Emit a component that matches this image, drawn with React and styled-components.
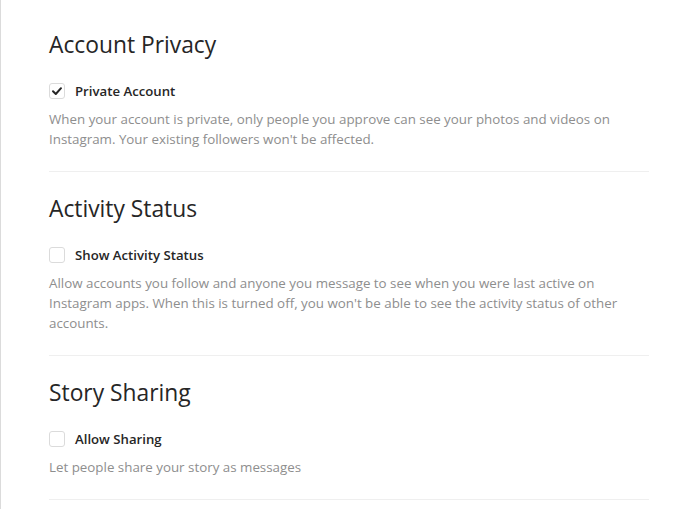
import styled, { createGlobalStyle } from "styled-components";

const GlobalStyle = createGlobalStyle`
    html, body {
        margin: 0;
        background: #fff;
    }
    body {
        font-family: "Open Sans", "Liberation Sans", sans-serif;
        color: #262626;
    }
`;

const Page = styled.div`
    min-height: 509px;
    box-sizing: border-box;
    border-left: 1px solid #dbdbdb;
    padding: 30px 0 0 48px;
`;

const SettingsList = styled.div`
    width: 600px;
`;

const Section = styled.section`
    padding: ${(p) => (p.first ? "0" : "22px")} 0 22px;
    border-bottom: 1px solid #efefef;
`;

const Heading = styled.h2`
    margin: 0;
    font-size: 22.8px;
    line-height: 30px;
    font-weight: 400;
    color: #262626;
`;

const OptionRow = styled.label`
    display: flex;
    align-items: center;
    gap: 10px;
    height: 20px;
    margin-top: 21px;
    cursor: pointer;
`;

const Box = styled.span`
    width: 16px;
    height: 16px;
    box-sizing: border-box;
    border: 1px solid #dbdbdb;
    border-radius: 3px;
    display: flex;
    align-items: center;
    justify-content: center;
    background: #fff;
`;

const OptionLabel = styled.span`
    font-size: 13.2px;
    font-weight: 600;
    color: #262626;
`;

const Description = styled.p`
    margin: 8px 0 0;
    font-size: 13.35px;
    line-height: 20px;
    color: #8e8e8e;
`;

const sections = [
    {
        title: "Account Privacy",
        option: "Private Account",
        checked: true,
        text: "When your account is private, only people you approve can see your photos and videos on Instagram. Your existing followers won't be affected.",
    },
    {
        title: "Activity Status",
        option: "Show Activity Status",
        checked: false,
        text: "Allow accounts you follow and anyone you message to see when you were last active on Instagram apps. When this is turned off, you won't be able to see the activity status of other accounts.",
    },
    {
        title: "Story Sharing",
        option: "Allow Sharing",
        checked: false,
        text: "Let people share your story as messages",
    },
];

const Check = () => (
    <svg width="12" height="12" viewBox="0 0 12 12">
        <path d="M2 6.2 L4.8 9 L10 3.2" fill="none" stroke="#262626" strokeWidth="2" strokeLinecap="round" strokeLinejoin="round" />
    </svg>
);

export default function App() {
    return (
        <>
            <GlobalStyle />
            <Page>
                <SettingsList>
                    {sections.map((s, i) => (
                        <Section key={s.title} first={i === 0}>
                            <Heading>{s.title}</Heading>
                            <OptionRow>
                                <Box>{s.checked && <Check />}</Box>
                                <OptionLabel>{s.option}</OptionLabel>
                            </OptionRow>
                            <Description>{s.text}</Description>
                        </Section>
                    ))}
                </SettingsList>
            </Page>
        </>
    );
}
